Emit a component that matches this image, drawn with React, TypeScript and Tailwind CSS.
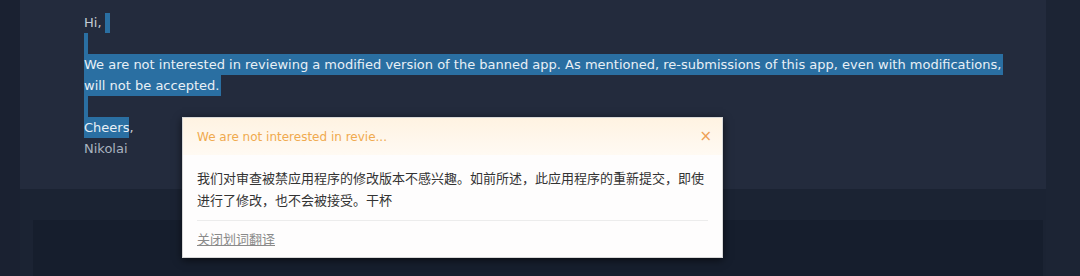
import React from "react";

const sel = "bg-[#2a6fa2] text-[#e8f0f6]";

export default function App() {
  return (
    <div
      className="relative w-[1080px] h-[276px] overflow-hidden flex bg-[#1b2333]"
      style={{ fontFamily: '"DejaVu Sans", Verdana, sans-serif' }}
    >
      <div className="w-[20px] h-full bg-[#1a2131]" />
      <div className="w-[1026px] flex flex-col">
        <div className="h-[189px] bg-[#232b3d] pl-[64px] pt-[12px] text-[13px] leading-[21px] text-[#c3ccd6]">
          <div className="flex h-[21px] items-stretch">
            <span>Hi,</span>
            <span className="w-[3px]" />
            <span className={`${sel} w-[5px] mt-[1px]`} />
          </div>
          <div className="flex h-[21px]">
            <span className={`${sel} w-[4px]`} />
          </div>
          <div className="flex h-[21px]">
            <span className={`${sel} pr-[2px] whitespace-nowrap`}>
              We are not interested in reviewing a modified version of the banned app. As mentioned, re-submissions of this app, even with modifications,
            </span>
          </div>
          <div className="flex h-[21px]">
            <span className={`${sel} pr-[2px] whitespace-nowrap`}>will not be accepted.</span>
          </div>
          <div className="flex h-[21px]">
            <span className={`${sel} w-[4px]`} />
          </div>
          <div className="flex h-[21px]">
            <span className={sel}>Cheers</span>
            <span>,</span>
          </div>
          <div className="flex h-[20px] text-[#a9b3bf]">
            <span>Nikolai</span>
          </div>
        </div>
        <div className="h-[31px] bg-[#1b2333]" />
        <div className="flex-1 ml-[13px] mr-[3px] bg-[#161e2d]" />
      </div>
      <div className="w-[34px] h-full bg-[#1c2434]" />

      <div className="absolute left-[182px] top-[117px] w-[541px] h-[141px] bg-[#fefdfd] border border-[#d8d8d8] shadow-[0_2px_8px_rgba(0,0,0,0.6)] flex flex-col">
        <div className="h-[37px] bg-gradient-to-b from-[#fff3e2] to-[#fffaf3] flex items-center justify-between pl-[14px] pr-[10px]">
          <span className="text-[12px] text-[#f0aa4e]">We are not interested in revie...</span>
          <span className="text-[15px] text-[#ee9f55] leading-none">×</span>
        </div>
        <div
          className="px-[14px] pt-[12px] text-[13px] leading-[22px] text-[#333333]"
          style={{ fontFamily: '"Noto Sans CJK SC", sans-serif' }}
        >
          <div className="whitespace-nowrap">我们对审查被禁应用程序的修改版本不感兴趣。如前所述，此应用程序的重新提交，即使</div>
          <div className="whitespace-nowrap">进行了修改，也不会被接受。干杯</div>
        </div>
        <div className="mx-[14px] mt-[9px] h-px bg-[#ececec]" />
        <div
          className="px-[14px] pt-[9px] text-[13px] leading-[18px] text-[#8a8a8a]"
          style={{ fontFamily: '"Noto Sans CJK SC", sans-serif' }}
        >
          <span className="underline">关闭划词翻译</span>
        </div>
      </div>
    </div>
  );
}
